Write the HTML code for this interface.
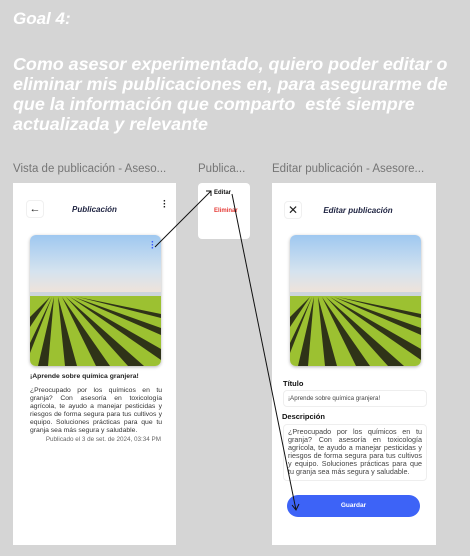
<!DOCTYPE html><html><head><meta charset="utf-8"><style>
*{margin:0;padding:0;box-sizing:border-box}
body{width:470px;height:556px;background:#d5d5d5;font-family:"Liberation Sans",sans-serif;position:relative;overflow:hidden}
.goal{position:absolute;left:13px;top:9px;color:#fff;font-weight:bold;font-style:italic;font-size:17px}
.story{position:absolute;left:13px;top:54px;width:455px;color:#fff;font-weight:bold;font-style:italic;font-size:17.9px;line-height:20px}
.lbl{position:absolute;top:163px;color:#757575;font-size:11.5px}
.frame{position:absolute;background:#fff}
.img{position:absolute;width:131px;height:131px;border-radius:6px;overflow:hidden;box-shadow:0 1px 3px rgba(0,0,0,.3)}
.t{position:absolute;font-size:7px;color:#333}
</style></head><body>
<div class="goal">Goal 4:</div>
<div class="story">Como asesor experimentado, quiero poder editar o eliminar mis publicaciones en, para asegurarme de que la información que comparto&nbsp; esté siempre actualizada y relevante</div>
<div class="lbl" style="left:13px">Vista de publicación - Aseso...</div>
<div class="lbl" style="left:198px">Publica...</div>
<div class="lbl" style="left:272px">Editar publicación - Asesore...</div>

<svg width="0" height="0" style="position:absolute"><defs><linearGradient id="s" x1="0" y1="0" x2="0" y2="1"><stop offset="0" stop-color="#9fc8f0"/><stop offset=".6" stop-color="#d5e3ef"/><stop offset="1" stop-color="#f3e3d6"/></linearGradient></defs></svg>

<div class="frame" style="left:13px;top:183px;width:163px;height:362px">
 <div style="position:absolute;left:13px;top:17px;width:18px;height:18px;border:1px solid #f0f0f0;border-radius:4px;font-size:11px;text-align:center;line-height:16px;color:#222">←</div>
 <div style="position:absolute;left:0;width:163px;top:22px;text-align:center;font-size:8px;font-weight:bold;font-style:italic;color:#1d2240">Publicación</div>
 <div style="position:absolute;left:150px;top:17px;font-size:10px;line-height:3px;color:#222;font-weight:bold">·<br>·<br>·</div>
 <div class="img" style="left:17px;top:52px"><svg width="131" height="131"><rect width="131" height="61" fill="url(#s)"/><rect x="0" y="57" width="131" height="4" fill="#cdd5dc"/><rect y="61" width="131" height="70" fill="#9cc131"/><g fill="#2f3318"><polygon points="20,62 0,82 0,92"/><polygon points="22,62 0,108 0,118"/><polygon points="24,62 8,131 18,131"/><polygon points="28,62 35,131 47,131"/><polygon points="32,62 66,131 80,131"/><polygon points="36,62 98,131 114,131"/><polygon points="40,62 131,125 131,114"/><polygon points="44,62 131,100 131,93"/><polygon points="48,62 131,83 131,79"/></g></svg>
 <div style="position:absolute;left:121px;top:6px;color:#3a5bff;font-size:10px;line-height:3px;font-weight:bold">·<br>·<br>·</div></div>
 <div class="t" style="left:17px;top:190px;font-weight:bold;color:#222;font-size:6.8px">¡Aprende sobre química granjera!</div>
 <div class="t" style="left:17px;top:204px;width:132px;text-align:justify;line-height:8px;font-size:6.8px">¿Preocupado por los químicos en tu granja? Con asesoría en toxicología agrícola, te ayudo a manejar pesticidas y riesgos de forma segura para tus cultivos y equipo. Soluciones prácticas para que tu granja sea más segura y saludable.</div>
 <div class="t" style="left:17px;top:253px;width:131px;text-align:right;color:#666;font-size:6.3px">Publicado el 3 de set. de 2024, 03:34 PM</div>
</div>

<div class="frame" style="left:198px;top:183px;width:52px;height:56px;border-radius:4px">
 <div class="t" style="left:16px;top:7px;font-weight:bold;color:#111;font-size:6px">Editar</div>
 <div class="t" style="left:16px;top:25px;font-weight:bold;color:#e53935;font-size:6px">Eliminar</div>
</div>

<div class="frame" style="left:272px;top:183px;width:164px;height:362px">
 <div style="position:absolute;left:12px;top:18px;width:18px;height:18px;border:1px solid #f0f0f0;border-radius:4px;font-size:12px;text-align:center;line-height:16px;color:#222">✕</div>
 <div style="position:absolute;left:0;width:164px;padding-left:8px;top:23px;text-align:center;font-size:8px;font-weight:bold;font-style:italic;color:#1d2240">Editar publicación</div>
 <div class="img" style="left:18px;top:52px"><svg width="131" height="131"><rect width="131" height="61" fill="url(#s)"/><rect x="0" y="57" width="131" height="4" fill="#cdd5dc"/><rect y="61" width="131" height="70" fill="#9cc131"/><g fill="#2f3318"><polygon points="20,62 0,82 0,92"/><polygon points="22,62 0,108 0,118"/><polygon points="24,62 8,131 18,131"/><polygon points="28,62 35,131 47,131"/><polygon points="32,62 66,131 80,131"/><polygon points="36,62 98,131 114,131"/><polygon points="40,62 131,125 131,114"/><polygon points="44,62 131,100 131,93"/><polygon points="48,62 131,83 131,79"/></g></svg></div>
 <div class="t" style="left:11px;top:196px;font-weight:bold;color:#111;font-size:7.5px">Título</div>
 <div style="position:absolute;left:11px;top:207px;width:144px;height:17px;border:1px solid #eee;border-radius:4px"></div>
 <div class="t" style="left:16px;top:212px;font-size:6.2px;color:#444">¡Aprende sobre química granjera!</div>
 <div class="t" style="left:10px;top:229px;font-weight:bold;color:#111;font-size:7.5px">Descripción</div>
 <div style="position:absolute;left:11px;top:241px;width:144px;height:57px;border:1px solid #eee;border-radius:4px"></div>
 <div class="t" style="left:16px;top:245px;width:134px;font-size:7.2px;line-height:7.9px;text-align:justify;color:#444">¿Preocupado por los químicos en tu granja? Con asesoría en toxicología agrícola, te ayudo a manejar pesticidas y riesgos de forma segura para tus cultivos y equipo. Soluciones prácticas para que tu granja sea más segura y saludable.</div>
 <div style="position:absolute;left:15px;top:312px;width:133px;height:22px;background:#3d63f7;border-radius:11px;color:#fff;font-size:6.5px;font-weight:bold;text-align:center;line-height:22px">Guardar</div>
</div>

<svg style="position:absolute;left:0;top:0" width="470" height="556"><g stroke="#111" stroke-width="1" fill="none"><line x1="155" y1="247" x2="211" y2="191"/><polyline points="206,191 211,191 211,196"/><line x1="232" y1="194" x2="296" y2="510"/><polyline points="292,505 296,510 299,504"/></g></svg>
</body></html>
